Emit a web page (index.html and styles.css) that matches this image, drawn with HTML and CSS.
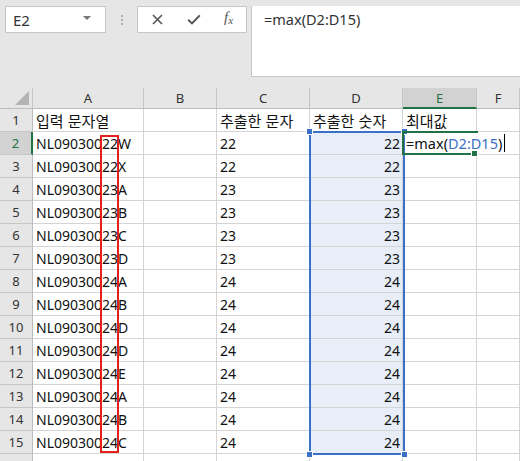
FILE: index.html
```html
<!DOCTYPE html>
<html lang="ko">
<head>
<meta charset="utf-8">
<link rel="stylesheet" href="styles.css">
</head>
<body>
<div class="app">
  <div class="toolbar">
    <div class="namebox"><span class="name">E2</span><span class="caret"></span></div>
    <div class="dots"><i></i><i></i><i></i></div>
    <div class="fbtns">
      <svg class="ico x" width="11" height="11" viewBox="0 0 11 11"><path d="M1 1L10 10M10 1L1 10" stroke="#555" stroke-width="1.6" fill="none"/></svg>
      <svg class="ico ok" width="14" height="11" viewBox="0 0 14 11"><path d="M1.2 5.8L5 9.4L12.8 1.4" stroke="#555" stroke-width="2" fill="none"/></svg>
      <span class="fx">f<sub>x</sub></span>
    </div>
    <div class="finput">=max(D2:D15)</div>
  </div>
  <div class="sheet">
    <div class="grid">
      <div class="corner"><span class="tri"></span></div>
      <div class="ch">A</div><div class="ch">B</div><div class="ch">C</div><div class="ch">D</div><div class="ch act">E</div><div class="ch">F</div>

      <div class="rh">1</div><div class="c ko">입력 문자열</div><div class="c"></div><div class="c ko">추출한 문자</div><div class="c ko">추출한 숫자</div><div class="c ko">최대값</div><div class="c"></div>
      <div class="rh act">2</div><div class="c">NL09030022W</div><div class="c"></div><div class="c">22</div><div class="c n sel">22</div><div class="c edit"><span class="etext">=max(<b>D2:D15</b>)<i class="cursor"></i></span></div><div class="c"></div>
      <div class="rh">3</div><div class="c">NL09030022X</div><div class="c"></div><div class="c">22</div><div class="c n sel">22</div><div class="c"></div><div class="c"></div>
      <div class="rh">4</div><div class="c">NL09030023A</div><div class="c"></div><div class="c">23</div><div class="c n sel">23</div><div class="c"></div><div class="c"></div>
      <div class="rh">5</div><div class="c">NL09030023B</div><div class="c"></div><div class="c">23</div><div class="c n sel">23</div><div class="c"></div><div class="c"></div>
      <div class="rh">6</div><div class="c">NL09030023C</div><div class="c"></div><div class="c">23</div><div class="c n sel">23</div><div class="c"></div><div class="c"></div>
      <div class="rh">7</div><div class="c">NL09030023D</div><div class="c"></div><div class="c">23</div><div class="c n sel">23</div><div class="c"></div><div class="c"></div>
      <div class="rh">8</div><div class="c">NL09030024A</div><div class="c"></div><div class="c">24</div><div class="c n sel">24</div><div class="c"></div><div class="c"></div>
      <div class="rh">9</div><div class="c">NL09030024B</div><div class="c"></div><div class="c">24</div><div class="c n sel">24</div><div class="c"></div><div class="c"></div>
      <div class="rh">10</div><div class="c">NL09030024D</div><div class="c"></div><div class="c">24</div><div class="c n sel">24</div><div class="c"></div><div class="c"></div>
      <div class="rh">11</div><div class="c">NL09030024D</div><div class="c"></div><div class="c">24</div><div class="c n sel">24</div><div class="c"></div><div class="c"></div>
      <div class="rh">12</div><div class="c">NL09030024E</div><div class="c"></div><div class="c">24</div><div class="c n sel">24</div><div class="c"></div><div class="c"></div>
      <div class="rh">13</div><div class="c">NL09030024A</div><div class="c"></div><div class="c">24</div><div class="c n sel">24</div><div class="c"></div><div class="c"></div>
      <div class="rh">14</div><div class="c">NL09030024B</div><div class="c"></div><div class="c">24</div><div class="c n sel">24</div><div class="c"></div><div class="c"></div>
      <div class="rh">15</div><div class="c">NL09030024C</div><div class="c"></div><div class="c">24</div><div class="c n sel">24</div><div class="c"></div><div class="c"></div>
      <div class="rh"></div><div class="c"></div><div class="c"></div><div class="c"></div><div class="c"></div><div class="c"></div><div class="c"></div>
    </div>
    <div class="redbox"></div>
    <div class="selbox"><i class="h tl"></i><i class="h tr"></i><i class="h bl"></i><i class="h br"></i></div>
    <div class="editbox"><i class="gh"></i></div>
  </div>
</div>
</body>
</html>
```
FILE: styles.css
```css
html, body { margin: 0; padding: 0; }
body {
  width: 520px;
  height: 461px;
  overflow: hidden;
  background: #e6e6e6;
  font-family: "Noto Sans", "Noto Sans CJK KR", sans-serif;
}
.app { display: flex; flex-direction: column; }

.toolbar {
  height: 88px;
  box-sizing: border-box;
  padding-top: 6px;
  display: flex;
  align-items: flex-start;
}
.namebox {
  margin-left: 5px;
  width: 101px;
  height: 27px;
  box-sizing: border-box;
  background: #fff;
  border: 1px solid #c6c6c6;
  display: flex;
  align-items: center;
  justify-content: space-between;
  padding: 0 14px 0 7px;
}
.name { font-size: 15px; color: #333; }
.caret {
  width: 0; height: 0;
  border-left: 4px solid transparent;
  border-right: 4px solid transparent;
  border-top: 4px solid #777;
  margin-top: -4px;
}
.dots {
  width: 31px;
  height: 27px;
  display: flex;
  flex-direction: column;
  align-items: center;
  justify-content: center;
  gap: 2px;
}
.dots i { display: block; width: 2px; height: 2px; background: #b0b0b0; }
.fbtns {
  width: 110px;
  height: 27px;
  box-sizing: border-box;
  background: #fff;
  border: 1px solid #c6c6c6;
  display: flex;
  align-items: center;
  padding-left: 14px;
}
.ico.ok { margin-left: 24px; }
.fx {
  margin-left: 23px;
  font-family: "Liberation Serif", serif;
  font-style: italic;
  font-size: 15px;
  color: #555;
  line-height: 1;
  margin-top: -4px;
}
.fx sub { font-size: 11px; vertical-align: -2px; }
.finput {
  margin-left: 4px;
  flex: 1;
  height: 71px;
  box-sizing: border-box;
  background: #fff;
  border-left: 1px solid #c6c6c6;
  border-bottom: 1px solid #c6c6c6;
  padding: 3px 0 0 12px;
  font-size: 14.5px;
  color: #333;
}

.sheet { position: relative; }
.grid {
  display: grid;
  grid-template-columns: 33px 111px 73px 93px 93px 74px 1fr;
  grid-template-rows: 21px repeat(16, 23px);
  background: #fff;
}
.corner {
  background: #e6e6e6;
  border-right: 1px solid #c6c6c6;
  border-bottom: 1px solid #bdbdbd;
  position: relative;
}
.tri {
  position: absolute;
  right: 3px;
  bottom: 3px;
  width: 0; height: 0;
  border-left: 14px solid transparent;
  border-bottom: 14px solid #b4b4b4;
}
.ch {
  background: #e6e6e6;
  border-right: 1px solid #c6c6c6;
  border-bottom: 1px solid #bdbdbd;
  display: flex;
  align-items: center;
  justify-content: center;
  font-size: 13px;
  color: #333;
}
.ch.act {
  background: #d2d2d2;
  color: #217346;
  border-bottom: 2px solid #217346;
}
.rh {
  background: #e6e6e6;
  border-right: 1px solid #bdbdbd;
  border-bottom: 1px solid #c6c6c6;
  display: flex;
  align-items: center;
  justify-content: center;
  font-size: 13px;
  color: #333;
}
.rh.act {
  background: #d2d2d2;
  color: #217346;
  border-right: 2px solid #217346;
}
.c {
  border-right: 1px solid #d4d4d4;
  border-bottom: 1px solid #d4d4d4;
  display: flex;
  align-items: center;
  padding: 0 3px 0 3px;
  font-size: 14px;
  color: #111;
  white-space: nowrap;
  min-width: 0;
}
.c.ko { font-family: "Noto Sans CJK KR", sans-serif; font-size: 15px; }
.c.n { justify-content: flex-end; padding-right: 2px; }
.c.sel { background: #e8eef8; }
.c.edit { position: relative; z-index: 2; overflow: visible; padding-left: 3px; font-size: 14.5px; }
.etext {
  background: #fff;
  display: inline-flex;
  align-items: center;
  padding-right: 2px;
}
.etext b { font-weight: normal; color: #3a6fc4; }
.cursor {
  display: inline-block;
  width: 1px;
  height: 18px;
  background: #000;
  margin-left: 2px;
}

.redbox {
  position: absolute;
  left: 100px;
  top: 47px;
  width: 19px;
  height: 318px;
  box-sizing: border-box;
  border: 2px solid #e5201c;
  z-index: 3;
}
.selbox {
  position: absolute;
  left: 309px;
  top: 43px;
  width: 96px;
  height: 324px;
  box-sizing: border-box;
  border: 2px solid #3a70c7;
  z-index: 3;
}
.h {
  position: absolute;
  width: 5px;
  height: 5px;
  background: #3a70c7;
  border: 1px solid #fff;
}
.h.tl { left: -5px; top: -5px; }
.h.tr { right: -5px; top: -5px; }
.h.bl { left: -5px; bottom: -5px; }
.h.br { right: -5px; bottom: -5px; }
.editbox {
  position: absolute;
  left: 402px;
  top: 43px;
  width: 76px;
  height: 24px;
  box-sizing: border-box;
  border: 2px solid #217346;
  border-right: none;
  z-index: 3;
}
.gh {
  position: absolute;
  right: 0;
  bottom: -4px;
  width: 5px;
  height: 5px;
  background: #217346;
  border: 1px solid #fff;
}
```
